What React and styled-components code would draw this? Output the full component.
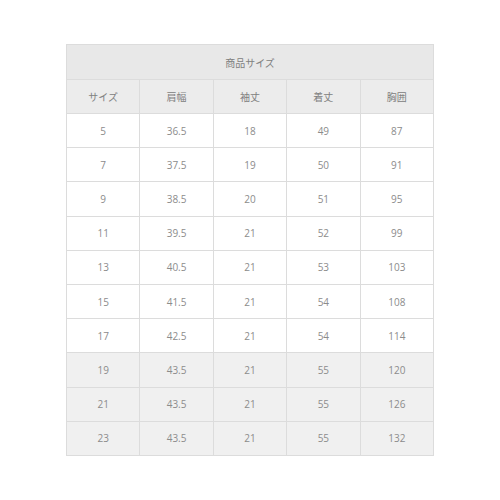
import React from 'react';
import styled, { createGlobalStyle } from 'styled-components';

const GlobalStyle = createGlobalStyle`
  html, body {
    margin: 0;
    padding: 0;
    background: #fff;
  }
  body {
    font-family: "Open Sans", "Noto Sans CJK JP", sans-serif;
  }
`;

const Page = styled.div`
  display: flex;
  justify-content: center;
  padding-top: 44px;
`;

const Table = styled.table`
  width: 368px;
  border-collapse: collapse;
  table-layout: fixed;
  border: 1px solid #dcdcdc;
`;

const TitleCell = styled.th`
  height: 34px;
  padding: 0;
  background: #e8e8e8;
  border: 1px solid #dcdcdc;
  color: #808080;
  font-size: 10px;
  font-weight: 400;
  text-align: center;
`;

const HeadCell = styled.th`
  height: 33px;
  padding: 0;
  background: #ececec;
  border: 1px solid #dcdcdc;
  color: #808080;
  font-size: 10px;
  font-weight: 400;
  text-align: center;
`;

const Cell = styled.td`
  height: 33.2px;
  padding: 0;
  background: ${props => (props.$shaded ? '#f0f0f0' : '#fff')};
  border: 1px solid #dcdcdc;
  color: #8c8c8c;
  font-size: 10px;
  text-align: center;
`;

const headers = ['サイズ', '肩幅', '袖丈', '着丈', '胸囲'];

const rows = [
  ['5', '36.5', '18', '49', '87'],
  ['7', '37.5', '19', '50', '91'],
  ['9', '38.5', '20', '51', '95'],
  ['11', '39.5', '21', '52', '99'],
  ['13', '40.5', '21', '53', '103'],
  ['15', '41.5', '21', '54', '108'],
  ['17', '42.5', '21', '54', '114'],
  ['19', '43.5', '21', '55', '120', true],
  ['21', '43.5', '21', '55', '126', true],
  ['23', '43.5', '21', '55', '132', true],
];

export default function App() {
  return (
    <>
      <GlobalStyle />
      <Page>
        <Table>
          <thead>
            <tr>
              <TitleCell colSpan={5}>商品サイズ</TitleCell>
            </tr>
            <tr>
              {headers.map(h => (
                <HeadCell key={h}>{h}</HeadCell>
              ))}
            </tr>
          </thead>
          <tbody>
            {rows.map(r => (
              <tr key={r[0]}>
                {r.slice(0, 5).map((v, i) => (
                  <Cell key={i} $shaded={r[5]}>{v}</Cell>
                ))}
              </tr>
            ))}
          </tbody>
        </Table>
      </Page>
    </>
  );
}
